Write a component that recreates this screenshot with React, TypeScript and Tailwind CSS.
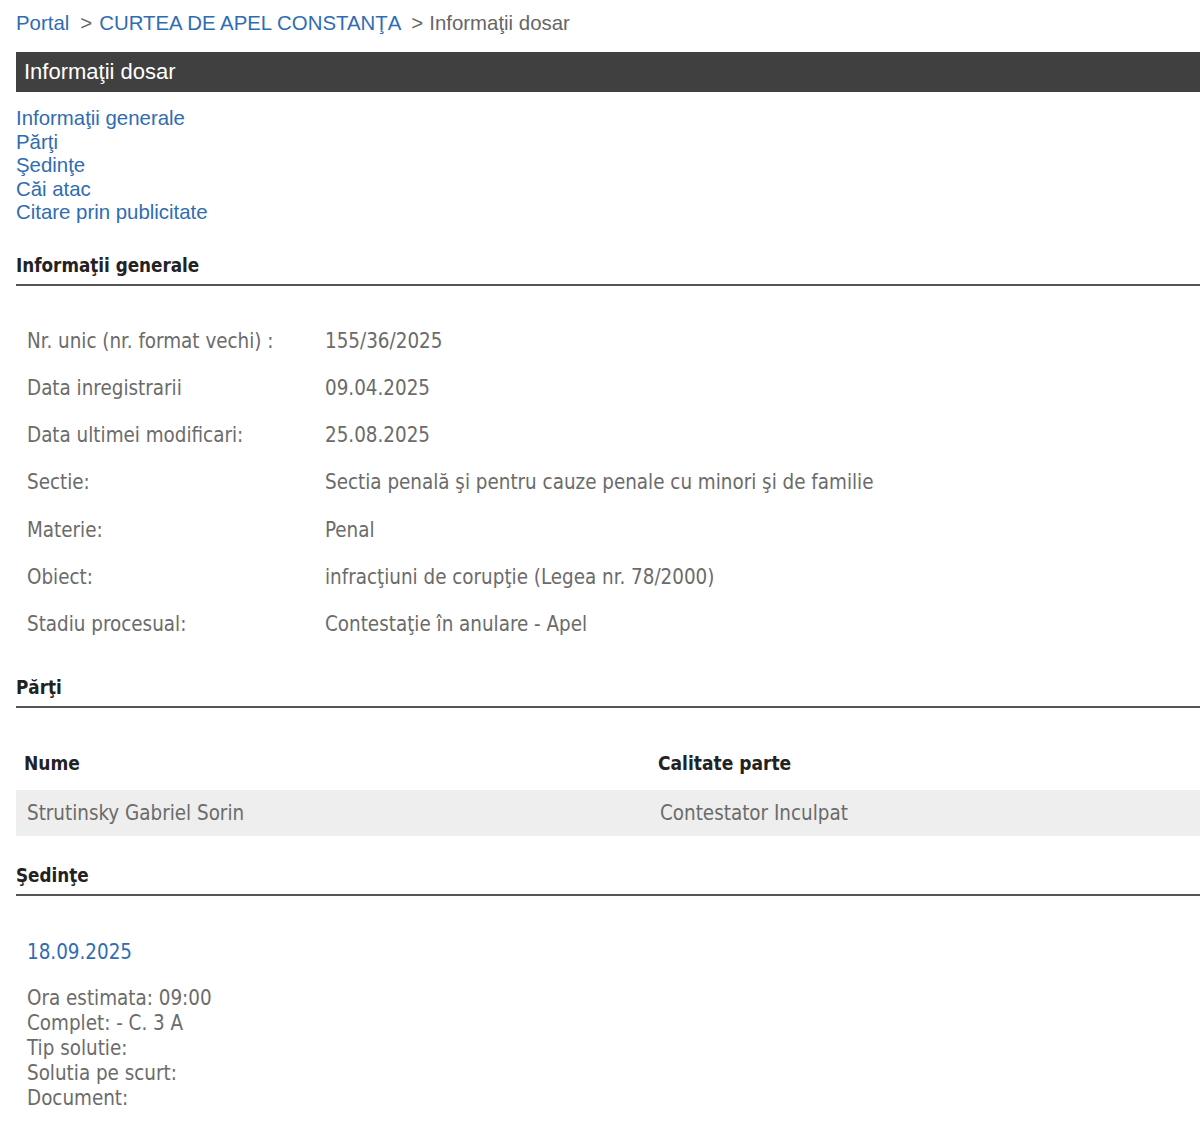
const info = [
  ["Nr. unic (nr. format vechi) :", "155/36/2025"],
  ["Data inregistrarii", "09.04.2025"],
  ["Data ultimei modificari:", "25.08.2025"],
  ["Sectie:", "Sectia penală şi pentru cauze penale cu minori şi de familie"],
  ["Materie:", "Penal"],
  ["Obiect:", "infracţiuni de corupţie (Legea nr. 78/2000)"],
  ["Stadiu procesual:", "Contestaţie în anulare - Apel"],
];

const links = ["Informaţii generale", "Părţi", "Şedinţe", "Căi atac", "Citare prin publicitate"];

const arial = "font-['Liberation_Sans',Arial,sans-serif]";
const tahoma = "font-['DejaVu_Sans_Condensed','DejaVu_Sans',sans-serif]";

function SectionTitle({ children }: { children: React.ReactNode }) {
  return (
    <div className="border-b-2 border-[#555] pb-[6px]">
      <span className={`${tahoma} block text-[18.7px] font-bold leading-[24px] text-[#222]`}>
        {children}
      </span>
    </div>
  );
}

export default function App() {
  return (
    <div className="min-h-[1128px] w-[1200px] overflow-hidden bg-white pl-[16px] pt-[11px]">
      <nav className={`${arial} flex h-[24px] items-center text-[20.4px] leading-[24px]`}>
        <a className="text-[#2f6db3]">Portal</a>
        <span className="ml-[11px] text-[#666]">&gt;</span>
        <a className="ml-[7px] text-[#2f6db3]">CURTEA DE APEL CONSTANŢA</a>
        <span className="ml-[10px] text-[#666]">&gt;</span>
        <span className="ml-[6px] text-[#666]">Informaţii dosar</span>
      </nav>

      <div className="mt-[17px] flex h-[40px] items-center bg-[#404040] pl-[8px]">
        <h1 className={`${arial} text-[22px] leading-[40px] text-white`}>Informaţii dosar</h1>
      </div>

      <ul className={`${arial} mt-[15px] text-[20.4px] leading-[23.5px] text-[#2f6db3]`}>
        {links.map((link) => (
          <li key={link}>
            <a>{link}</a>
          </li>
        ))}
      </ul>

      <div className="mt-[29px]">
        <SectionTitle>Informaţii generale</SectionTitle>
      </div>

      <div className={`${tahoma} mt-[32px] text-[20.4px] text-[#6b6b6b]`}>
        {info.map(([label, value]) => (
          <div key={label} className="grid h-[47.2px] grid-cols-[298px_1fr] items-center pl-[11px]">
            <span>{label}</span>
            <span>{value}</span>
          </div>
        ))}
      </div>

      <div className="mt-[28px]">
        <SectionTitle>Părţi</SectionTitle>
      </div>

      <div className={`${tahoma} mt-[32px] text-[20.4px]`}>
        <div className="grid h-[46px] grid-cols-[634px_1fr] items-center text-[19px] font-bold text-[#222]">
          <span className="pl-[8px]">Nume</span>
          <span className="pl-[8px]">Calitate parte</span>
        </div>
        <div className="mt-[4px] grid h-[46px] grid-cols-[634px_1fr] items-center bg-[#eeeeee] text-[#6b6b6b]">
          <span className="pl-[11px]">Strutinsky Gabriel Sorin</span>
          <span className="pl-[10px]">Contestator Inculpat</span>
        </div>
      </div>

      <div className="mt-[28px]">
        <SectionTitle>Şedinţe</SectionTitle>
      </div>

      <div className={`${tahoma} pl-[11px] text-[20.4px]`}>
        <a className="mt-[44px] block leading-[24px] text-[#2f6db3]">18.09.2025</a>
        <div className="mt-[22px] leading-[25px] text-[#6b6b6b]">
          <div>Ora estimata: 09:00</div>
          <div>Complet: - C. 3 A</div>
          <div>Tip solutie:</div>
          <div>Solutia pe scurt:</div>
          <div>Document:</div>
        </div>
      </div>
    </div>
  );
}
